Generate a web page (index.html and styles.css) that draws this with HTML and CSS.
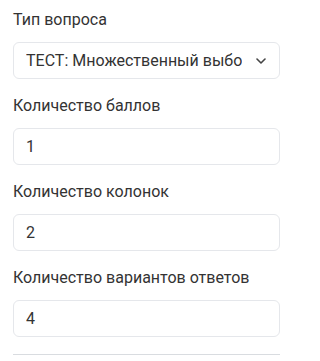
FILE: index.html
```html
<!DOCTYPE html>
<html lang="ru">
<head>
<meta charset="utf-8">
<link rel="stylesheet" href="styles.css">
</head>
<body>
<div class="panel">
  <div class="field">
    <label class="label">Тип вопроса</label>
    <div class="select">
      <span class="select-text">ТЕСТ: Множественный выбор</span>
      <svg class="chevron" width="10" height="6" viewBox="0 0 10 6"><path d="M1 1l4 4 4-4" fill="none" stroke="#444" stroke-width="1.6" stroke-linecap="round" stroke-linejoin="round"/></svg>
    </div>
  </div>
  <div class="field">
    <label class="label">Количество баллов</label>
    <input class="input" type="text" value="1">
  </div>
  <div class="field">
    <label class="label">Количество колонок</label>
    <input class="input" type="text" value="2">
  </div>
  <div class="field">
    <label class="label">Количество вариантов ответов</label>
    <input class="input" type="text" value="4">
  </div>
  <hr class="divider">
</div>
</body>
</html>
```
FILE: styles.css
```css
html, body {
  margin: 0;
  padding: 0;
  background: #fff;
}
body {
  font-family: Roboto, "Noto Sans", sans-serif;
  color: #333;
}
.panel {
  width: 267px;
  padding: 10px 0 0 13px;
  display: flex;
  flex-direction: column;
  gap: 17px;
}
.field {
  display: flex;
  flex-direction: column;
  gap: 12px;
}
.label {
  font-size: 16px;
  line-height: 20px;
  color: #333;
}
.select, .input {
  box-sizing: border-box;
  height: 37px;
  width: 267px;
  border: 1px solid #e5e7eb;
  border-radius: 6px;
  background: #fff;
  font-family: Roboto, "Noto Sans", sans-serif;
  font-size: 16px;
  color: #333;
}
.select {
  display: flex;
  align-items: center;
  padding: 0 13px 0 12px;
  gap: 14px;
}
.select-text {
  flex: 1;
  overflow: hidden;
  white-space: nowrap;
}
.chevron {
  flex: none;
}
.input {
  padding: 0 12px;
  outline: none;
}
.divider {
  margin: 0;
  border: none;
  border-top: 1px solid #d9dce0;
  width: 267px;
}
```
